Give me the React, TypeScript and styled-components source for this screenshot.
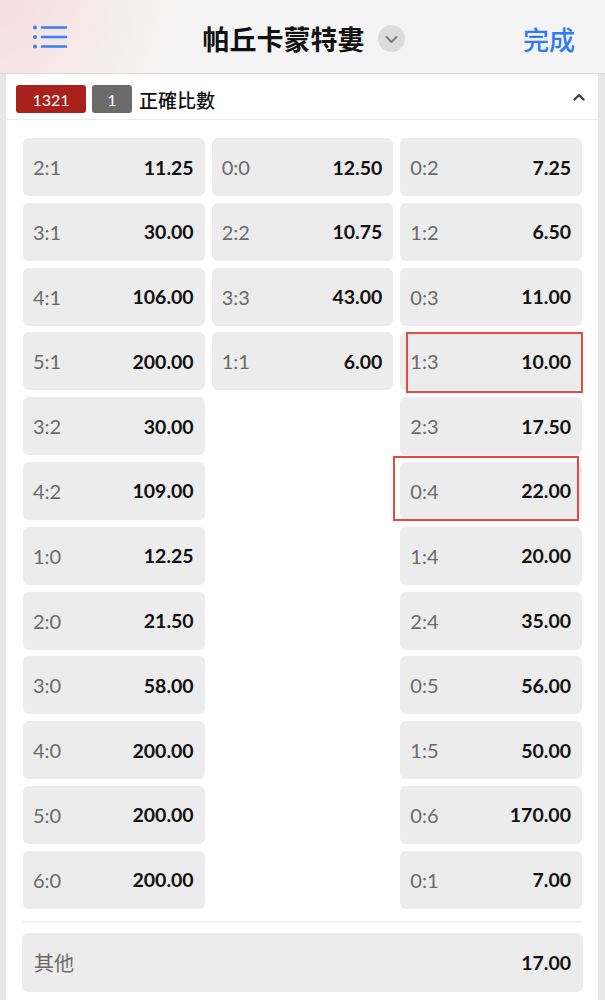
import * as React from 'react';
import styled, { createGlobalStyle } from 'styled-components';

// 比數賠率
type Odd = { score: string; price: string; mark?: [number, number, number, number] };

const columns: Odd[][] = [
    [
        { score: '2:1', price: '11.25' },
        { score: '3:1', price: '30.00' },
        { score: '4:1', price: '106.00' },
        { score: '5:1', price: '200.00' },
        { score: '3:2', price: '30.00' },
        { score: '4:2', price: '109.00' },
        { score: '1:0', price: '12.25' },
        { score: '2:0', price: '21.50' },
        { score: '3:0', price: '58.00' },
        { score: '4:0', price: '200.00' },
        { score: '5:0', price: '200.00' },
        { score: '6:0', price: '200.00' },
    ],
    [
        { score: '0:0', price: '12.50' },
        { score: '2:2', price: '10.75' },
        { score: '3:3', price: '43.00' },
        { score: '1:1', price: '6.00' },
    ],
    [
        { score: '0:2', price: '7.25' },
        { score: '1:2', price: '6.50' },
        { score: '0:3', price: '11.00' },
        { score: '1:3', price: '10.00', mark: [0, -1, -3, 6] },
        { score: '2:3', price: '17.50' },
        { score: '0:4', price: '22.00', mark: [-6, 3, -1, -7] },
        { score: '1:4', price: '20.00' },
        { score: '2:4', price: '35.00' },
        { score: '0:5', price: '56.00' },
        { score: '1:5', price: '50.00' },
        { score: '0:6', price: '170.00' },
        { score: '0:1', price: '7.00' },
    ],
];

const App = () => {
    return (
        <>
            <GlobalStyle />
            <Page>
                <Header>
                    <MenuButton>
                        <svg width="36" height="24" viewBox="0 0 36 24">
                            <circle cx="3" cy="2.5" r="2" fill="#3a7ef5" />
                            <circle cx="3" cy="12" r="2" fill="#3a7ef5" />
                            <circle cx="3" cy="21.5" r="2" fill="#3a7ef5" />
                            <path d="M10 2.5h24M10 12h24M10 21.5h24" stroke="#3a7ef5" strokeWidth="2.6" strokeLinecap="round" />
                        </svg>
                    </MenuButton>
                    <TitleGroup>
                        <Title>帕丘卡蒙特婁</Title>
                        <DropCircle>
                            <svg width="13" height="9" viewBox="0 0 13 9">
                                <path d="M1.5 2l5 5 5-5" fill="none" stroke="#7a7a7a" strokeWidth="2" strokeLinecap="round" strokeLinejoin="round" />
                            </svg>
                        </DropCircle>
                    </TitleGroup>
                    <Done>完成</Done>
                </Header>

                <Panel>
                    <MarketHead>
                        <Badge $bg="#a8211b" $width={70}>1321</Badge>
                        <Badge $bg="#6b6b6b" $width={40}>1</Badge>
                        <MarketTitle>正確比數</MarketTitle>
                        <Collapse>
                            <svg width="12" height="8" viewBox="0 0 12 8">
                                <path d="M1.5 6.5L6 2l4.5 4.5" fill="none" stroke="#444" strokeWidth="2.4" strokeLinecap="round" strokeLinejoin="round" />
                            </svg>
                        </Collapse>
                    </MarketHead>

                    <Grid>
                        {columns.map((col, i) => (
                            <Column key={i}>
                                {col.map((odd) => (
                                    <Cell key={odd.score}>
                                        <Score>{odd.score}</Score>
                                        <Price>{odd.price}</Price>
                                        {odd.mark && (
                                            <Highlight
                                                $top={odd.mark[0]}
                                                $right={odd.mark[1]}
                                                $bottom={odd.mark[2]}
                                                $left={odd.mark[3]}
                                            />
                                        )}
                                    </Cell>
                                ))}
                            </Column>
                        ))}
                    </Grid>

                    <Divider />

                    <OtherCell>
                        <Score>其他</Score>
                        <Price>17.00</Price>
                    </OtherCell>
                </Panel>
            </Page>
        </>
    );
};

export default App;

const GlobalStyle = createGlobalStyle`
    body {
        margin: 0;
        background-color: #e7e7ea;
        font-family: Lato, "Noto Sans CJK TC", sans-serif;
    }
`;

const Page = styled.div`
    width: 605px;
    height: 1000px;
    overflow: hidden;
    display: flex;
    flex-direction: column;
`;

const Header = styled.div`
    display: grid;
    grid-template-columns: 1fr auto 1fr;
    align-items: center;

    height: 74px;
    padding: 0 30px 0 32px;
    box-sizing: border-box;

    border-bottom: 1px solid #d8d8d8;
    background: radial-gradient(circle at 0 0, rgba(246, 214, 212, 0.75) 0, rgba(245, 243, 243, 0) 180px), #f5f4f4;
`;

const MenuButton = styled.div`
    display: flex;
    align-items: center;
    height: 24px;
`;

const TitleGroup = styled.div`
    display: flex;
    align-items: center;
    gap: 13px;
    padding-top: 4px;
`;

const Title = styled.div`
    font-family: "Noto Sans CJK TC", sans-serif;
    font-size: 27px;
    font-weight: 700;
    color: #111;
`;

const DropCircle = styled.div`
    display: flex;
    justify-content: center;
    align-items: center;

    width: 27px;
    height: 27px;
    padding-top: 2px;
    box-sizing: border-box;
    border-radius: 50%;
    background-color: #dcdcdc;
`;

const Done = styled.div`
    justify-self: end;
    padding-top: 4px;
    font-family: "Noto Sans CJK TC", sans-serif;
    font-size: 26px;
    font-weight: 500;
    color: #2f7bf5;
`;

const Panel = styled.div`
    flex: 1;
    margin: 0 7px 0 6px;
    background-color: #fff;
`;

const MarketHead = styled.div`
    display: flex;
    align-items: center;
    gap: 6px;

    height: 46px;
    padding: 5px 13px 0 10px;
    box-sizing: border-box;

    border-bottom: 1px solid #ececec;
`;

const Badge = styled.div<{ $bg: string; $width: number }>`
    display: flex;
    justify-content: center;
    align-items: center;

    width: ${({ $width }) => $width}px;
    height: 28px;
    border-radius: 3px;

    background-color: ${({ $bg }) => $bg};
    color: #fff;
    font-size: 16px;
`;

const MarketTitle = styled.div`
    margin-left: 1px;
    font-family: "Noto Sans CJK TC", sans-serif;
    font-size: 19px;
    font-weight: 500;
    color: #111;
`;

const Collapse = styled.div`
    display: flex;
    margin-left: auto;
    margin-bottom: 4px;
`;

const Grid = styled.div`
    display: grid;
    grid-template-columns: repeat(3, 1fr);
    column-gap: 7px;
    align-items: start;

    padding: 18px 16px 0 17px;
`;

const Column = styled.div`
    display: flex;
    flex-direction: column;
    gap: 6.8px;
`;

const Cell = styled.div`
    position: relative;

    display: flex;
    justify-content: space-between;
    align-items: center;

    height: 58px;
    padding: 0 11px 0 10px;
    border-radius: 6px;

    background-color: #ececec;
`;

const Score = styled.span`
    font-size: 20px;
    color: #6a6a6a;
`;

const Price = styled.span`
    font-size: 19.5px;
    font-weight: 700;
    color: #111;
`;

const Highlight = styled.span<{ $top: number; $right: number; $bottom: number; $left: number }>`
    position: absolute;
    top: ${({ $top }) => $top}px;
    right: ${({ $right }) => $right}px;
    bottom: ${({ $bottom }) => $bottom}px;
    left: ${({ $left }) => $left}px;

    border: 2px solid #e8483f;
    pointer-events: none;
`;

const Divider = styled.div`
    height: 2px;
    margin: 12px 16px 0 16px;
    background-color: #efefef;
`;

const OtherCell = styled(Cell)`
    height: 59px;
    margin: 10px 15px 0 16px;
    padding: 0 12px 0 12px;
`;
